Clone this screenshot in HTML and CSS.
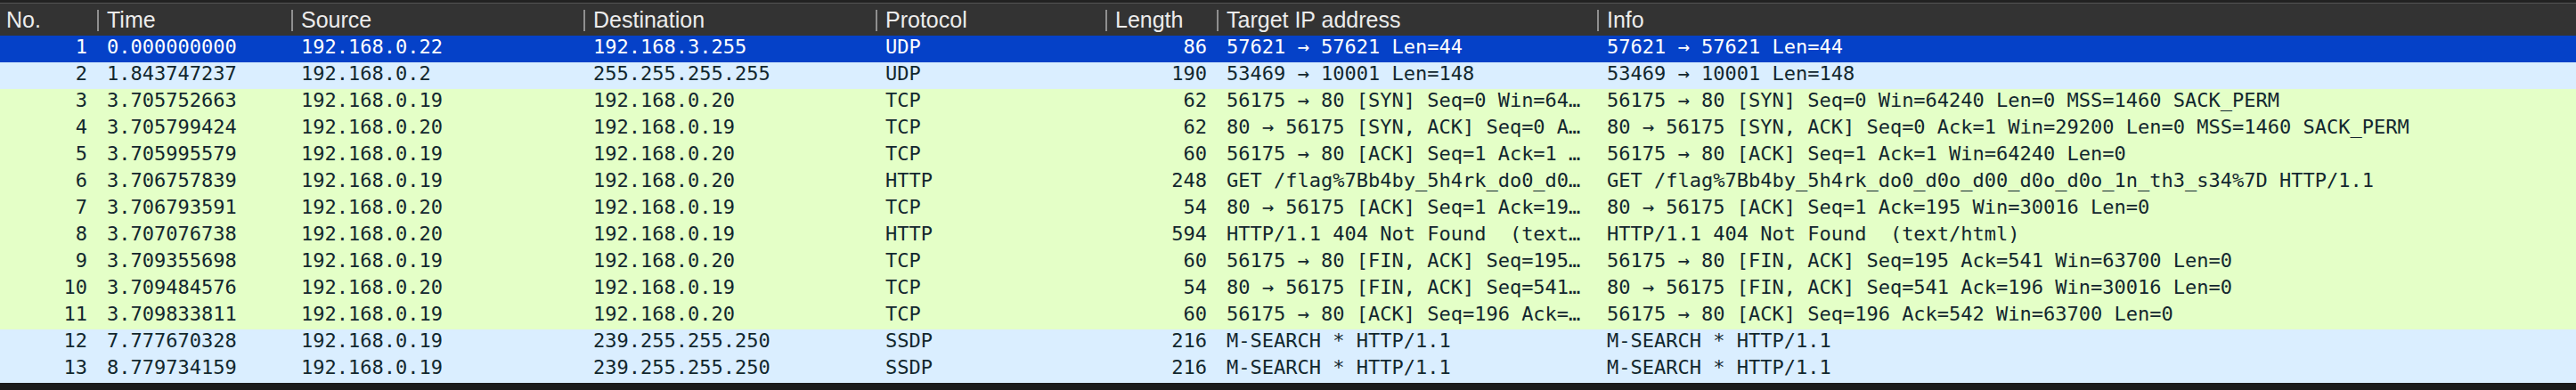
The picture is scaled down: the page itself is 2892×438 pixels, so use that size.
FILE: index.html
```html
<!DOCTYPE html>
<html lang="en">
<head>
<meta charset="utf-8">
<title>Packet list</title>
<link rel="stylesheet" href="styles.css">
</head>
<body>
<div class="packet-list">
  <div class="topstrip"></div>
  <div class="row header">
    <div class="hcell first">No.</div>
    <div class="hcell">Time</div>
    <div class="hcell">Source</div>
    <div class="hcell">Destination</div>
    <div class="hcell">Protocol</div>
    <div class="hcell">Length</div>
    <div class="hcell">Target IP address</div>
    <div class="hcell">Info</div>
  </div>

  <div class="row selected">
    <div class="cell num">1</div><div class="cell">0.000000000</div><div class="cell">192.168.0.22</div><div class="cell">192.168.3.255</div><div class="cell">UDP</div><div class="cell num">86</div><div class="cell">57621 → 57621 Len=44</div><div class="cell">57621 → 57621 Len=44</div>
  </div>
  <div class="row udp">
    <div class="cell num">2</div><div class="cell">1.843747237</div><div class="cell">192.168.0.2</div><div class="cell">255.255.255.255</div><div class="cell">UDP</div><div class="cell num">190</div><div class="cell">53469 → 10001 Len=148</div><div class="cell">53469 → 10001 Len=148</div>
  </div>
  <div class="row http">
    <div class="cell num">3</div><div class="cell">3.705752663</div><div class="cell">192.168.0.19</div><div class="cell">192.168.0.20</div><div class="cell">TCP</div><div class="cell num">62</div><div class="cell">56175 → 80 [SYN] Seq=0 Win=64…</div><div class="cell">56175 → 80 [SYN] Seq=0 Win=64240 Len=0 MSS=1460 SACK_PERM</div>
  </div>
  <div class="row http">
    <div class="cell num">4</div><div class="cell">3.705799424</div><div class="cell">192.168.0.20</div><div class="cell">192.168.0.19</div><div class="cell">TCP</div><div class="cell num">62</div><div class="cell">80 → 56175 [SYN, ACK] Seq=0 A…</div><div class="cell">80 → 56175 [SYN, ACK] Seq=0 Ack=1 Win=29200 Len=0 MSS=1460 SACK_PERM</div>
  </div>
  <div class="row http">
    <div class="cell num">5</div><div class="cell">3.705995579</div><div class="cell">192.168.0.19</div><div class="cell">192.168.0.20</div><div class="cell">TCP</div><div class="cell num">60</div><div class="cell">56175 → 80 [ACK] Seq=1 Ack=1 …</div><div class="cell">56175 → 80 [ACK] Seq=1 Ack=1 Win=64240 Len=0</div>
  </div>
  <div class="row http">
    <div class="cell num">6</div><div class="cell">3.706757839</div><div class="cell">192.168.0.19</div><div class="cell">192.168.0.20</div><div class="cell">HTTP</div><div class="cell num">248</div><div class="cell">GET /flag%7Bb4by_5h4rk_do0_d0…</div><div class="cell">GET /flag%7Bb4by_5h4rk_do0_d0o_d00_d0o_d0o_1n_th3_s34%7D HTTP/1.1</div>
  </div>
  <div class="row http">
    <div class="cell num">7</div><div class="cell">3.706793591</div><div class="cell">192.168.0.20</div><div class="cell">192.168.0.19</div><div class="cell">TCP</div><div class="cell num">54</div><div class="cell">80 → 56175 [ACK] Seq=1 Ack=19…</div><div class="cell">80 → 56175 [ACK] Seq=1 Ack=195 Win=30016 Len=0</div>
  </div>
  <div class="row http">
    <div class="cell num">8</div><div class="cell">3.707076738</div><div class="cell">192.168.0.20</div><div class="cell">192.168.0.19</div><div class="cell">HTTP</div><div class="cell num">594</div><div class="cell">HTTP/1.1 404 Not Found  (text…</div><div class="cell">HTTP/1.1 404 Not Found  (text/html)</div>
  </div>
  <div class="row http">
    <div class="cell num">9</div><div class="cell">3.709355698</div><div class="cell">192.168.0.19</div><div class="cell">192.168.0.20</div><div class="cell">TCP</div><div class="cell num">60</div><div class="cell">56175 → 80 [FIN, ACK] Seq=195…</div><div class="cell">56175 → 80 [FIN, ACK] Seq=195 Ack=541 Win=63700 Len=0</div>
  </div>
  <div class="row http">
    <div class="cell num">10</div><div class="cell">3.709484576</div><div class="cell">192.168.0.20</div><div class="cell">192.168.0.19</div><div class="cell">TCP</div><div class="cell num">54</div><div class="cell">80 → 56175 [FIN, ACK] Seq=541…</div><div class="cell">80 → 56175 [FIN, ACK] Seq=541 Ack=196 Win=30016 Len=0</div>
  </div>
  <div class="row http">
    <div class="cell num">11</div><div class="cell">3.709833811</div><div class="cell">192.168.0.19</div><div class="cell">192.168.0.20</div><div class="cell">TCP</div><div class="cell num">60</div><div class="cell">56175 → 80 [ACK] Seq=196 Ack=…</div><div class="cell">56175 → 80 [ACK] Seq=196 Ack=542 Win=63700 Len=0</div>
  </div>
  <div class="row udp">
    <div class="cell num">12</div><div class="cell">7.777670328</div><div class="cell">192.168.0.19</div><div class="cell">239.255.255.250</div><div class="cell">SSDP</div><div class="cell num">216</div><div class="cell">M-SEARCH * HTTP/1.1</div><div class="cell">M-SEARCH * HTTP/1.1</div>
  </div>
  <div class="row udp">
    <div class="cell num">13</div><div class="cell">8.779734159</div><div class="cell">192.168.0.19</div><div class="cell">239.255.255.250</div><div class="cell">SSDP</div><div class="cell num">216</div><div class="cell">M-SEARCH * HTTP/1.1</div><div class="cell">M-SEARCH * HTTP/1.1</div>
  </div>
</div>
</body>
</html>
```

FILE: styles.css
```css
html, body {
  margin: 0;
  padding: 0;
  background: #1b1b1b;
}

.packet-list {
  width: 2892px;
  display: flex;
  flex-direction: column;
}

.topstrip {
  height: 3px;
  background: #222222;
  border-bottom: 1px solid #555555;
}

.row {
  display: grid;
  grid-template-columns: 109px 218px 328px 328px 258px 125px 427px 1fr;
  height: 30px;
}

.header {
  height: 36px;
  background: #333333;
  color: #ececec;
  font-family: "Liberation Sans", Arial, sans-serif;
  font-size: 25px;
}

.hcell {
  display: flex;
  align-items: center;
  padding-top: 1px;
  white-space: nowrap;
  overflow: hidden;
}

.hcell::before {
  content: "";
  flex: none;
  width: 2px;
  height: 24px;
  margin-right: 9px;
  background: #8f8f8f;
}

.hcell.first {
  padding-left: 7px;
}

.hcell.first::before {
  display: none;
}

.cell {
  font-family: "DejaVu Sans Mono", Menlo, monospace;
  font-size: 22px;
  line-height: 26px;
  padding: 0 11px;
  white-space: pre;
  overflow: hidden;
}

.cell.num {
  text-align: right;
}

.selected {
  background: #0541c8;
  color: #ffffff;
}

.udp {
  background: #daeeff;
  color: #12272e;
}

.http {
  background: #e4ffc7;
  color: #12272e;
}
```
